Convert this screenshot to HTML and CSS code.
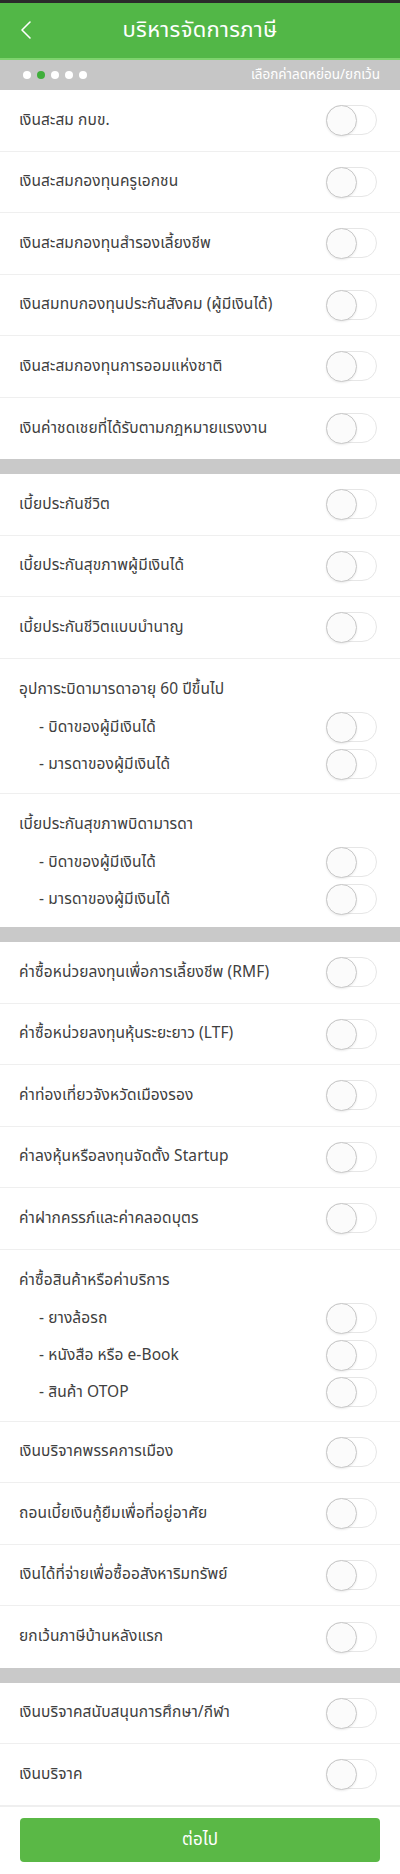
FILE: index.html
```html
<!DOCTYPE html>
<html lang="th">
<head>
<meta charset="utf-8">
<title>บริหารจัดการภาษี</title>
<link rel="stylesheet" href="styles.css">
</head>
<body>
<div class="app">
  <div class="statusbar"></div>
  <header class="header">
    <span class="back">
      <svg width="12" height="20" viewBox="0 0 12 20"><path d="M10 2 L2 10 L10 18" fill="none" stroke="#fff" stroke-width="1.6" stroke-linecap="round" stroke-linejoin="round"/></svg>
    </span>
    <h1 class="title">บริหารจัดการภาษี</h1>
  </header>
  <div class="accent"></div>
  <div class="stepbar">
    <div class="dots">
      <span class="dot"></span><span class="dot active"></span><span class="dot"></span><span class="dot"></span><span class="dot"></span>
    </div>
    <span class="step-label">เลือกค่าลดหย่อน/ยกเว้น</span>
  </div>

  <section class="section">
    <div class="row"><span class="label">เงินสะสม กบข.</span><span class="toggle"></span></div>
    <div class="row"><span class="label">เงินสะสมกองทุนครูเอกชน</span><span class="toggle"></span></div>
    <div class="row"><span class="label">เงินสะสมกองทุนสำรองเลี้ยงชีพ</span><span class="toggle"></span></div>
    <div class="row"><span class="label">เงินสมทบกองทุนประกันสังคม (ผู้มีเงินได้)</span><span class="toggle"></span></div>
    <div class="row"><span class="label">เงินสะสมกองทุนการออมแห่งชาติ</span><span class="toggle"></span></div>
    <div class="row last"><span class="label">เงินค่าชดเชยที่ได้รับตามกฎหมายแรงงาน</span><span class="toggle"></span></div>
  </section>
  <div class="divider"></div>

  <section class="section">
    <div class="row"><span class="label">เบี้ยประกันชีวิต</span><span class="toggle"></span></div>
    <div class="row"><span class="label">เบี้ยประกันสุขภาพผู้มีเงินได้</span><span class="toggle"></span></div>
    <div class="row"><span class="label">เบี้ยประกันชีวิตแบบบำนาญ</span><span class="toggle"></span></div>
    <div class="group">
      <div class="group-title">อุปการะบิดามารดาอายุ 60 ปีขึ้นไป</div>
      <div class="sub"><span class="label">- บิดาของผู้มีเงินได้</span><span class="toggle"></span></div>
      <div class="sub"><span class="label">- มารดาของผู้มีเงินได้</span><span class="toggle"></span></div>
    </div>
    <div class="group last short">
      <div class="group-title">เบี้ยประกันสุขภาพบิดามารดา</div>
      <div class="sub"><span class="label">- บิดาของผู้มีเงินได้</span><span class="toggle"></span></div>
      <div class="sub"><span class="label">- มารดาของผู้มีเงินได้</span><span class="toggle"></span></div>
    </div>
  </section>
  <div class="divider"></div>

  <section class="section">
    <div class="row"><span class="label">ค่าซื้อหน่วยลงทุนเพื่อการเลี้ยงชีพ (RMF)</span><span class="toggle"></span></div>
    <div class="row"><span class="label">ค่าซื้อหน่วยลงทุนหุ้นระยะยาว (LTF)</span><span class="toggle"></span></div>
    <div class="row"><span class="label">ค่าท่องเที่ยวจังหวัดเมืองรอง</span><span class="toggle"></span></div>
    <div class="row"><span class="label">ค่าลงหุ้นหรือลงทุนจัดตั้ง Startup</span><span class="toggle"></span></div>
    <div class="row"><span class="label">ค่าฝากครรภ์และค่าคลอดบุตร</span><span class="toggle"></span></div>
    <div class="group">
      <div class="group-title">ค่าซื้อสินค้าหรือค่าบริการ</div>
      <div class="sub"><span class="label">- ยางล้อรถ</span><span class="toggle"></span></div>
      <div class="sub"><span class="label">- หนังสือ หรือ e-Book</span><span class="toggle"></span></div>
      <div class="sub"><span class="label">- สินค้า OTOP</span><span class="toggle"></span></div>
    </div>
    <div class="row"><span class="label">เงินบริจาคพรรคการเมือง</span><span class="toggle"></span></div>
    <div class="row"><span class="label">ถอนเบี้ยเงินกู้ยืมเพื่อที่อยู่อาศัย</span><span class="toggle"></span></div>
    <div class="row"><span class="label">เงินได้ที่จ่ายเพื่อซื้ออสังหาริมทรัพย์</span><span class="toggle"></span></div>
    <div class="row last"><span class="label">ยกเว้นภาษีบ้านหลังแรก</span><span class="toggle"></span></div>
  </section>
  <div class="divider"></div>

  <section class="section">
    <div class="row"><span class="label">เงินบริจาคสนับสนุนการศึกษา/กีฬา</span><span class="toggle"></span></div>
    <div class="row"><span class="label">เงินบริจาค</span><span class="toggle"></span></div>
  </section>

  <div class="footer">
    <button class="next" type="button">ต่อไป</button>
  </div>
</div>
</body>
</html>
```

FILE: styles.css
```css
* { box-sizing: border-box; }
html, body {
  margin: 0;
  padding: 0;
  background: #ffffff;
}
body {
  font-family: "Noto Sans Thai", "Noto Sans", "DejaVu Sans", sans-serif;
  color: #3a3a3a;
}
.app {
  width: 400px;
  display: flex;
  flex-direction: column;
}
.statusbar {
  height: 3px;
  background: #2a2a2a;
}
.header {
  height: 55px;
  background: #52b747;
  display: flex;
  align-items: center;
  justify-content: center;
  position: relative;
}
.back {
  position: absolute;
  left: 20px;
  top: 17px;
  display: flex;
}
.title {
  margin: 0;
  font-size: 22px;
  font-weight: 400;
  color: #ffffff;
  letter-spacing: 0.3px;
}
.accent {
  height: 2px;
  background: #7ed36e;
}
.stepbar {
  height: 30px;
  background: #c6c6c6;
  display: flex;
  align-items: center;
  justify-content: space-between;
  padding: 0 20px 0 23px;
}
.dots {
  display: flex;
  gap: 6px;
}
.dot {
  width: 8px;
  height: 8px;
  border-radius: 50%;
  background: #ffffff;
}
.dot.active {
  background: #3fae3b;
}
.step-label {
  font-size: 13.5px;
  color: #ffffff;
}
.section {
  display: flex;
  flex-direction: column;
}
.row {
  height: 61.5px;
  display: flex;
  align-items: center;
  justify-content: space-between;
  padding: 0 23px 0 19px;
  border-bottom: 1.5px solid #efefef;
}
.row.last, .group.last {
  border-bottom: none;
}
.label {
  font-size: 15.5px;
  color: #404040;
  letter-spacing: 0.1px;
}
.group {
  display: flex;
  flex-direction: column;
  padding: 12px 23px 10px 19px;
  border-bottom: 1.5px solid #efefef;
}
.group.short {
  padding-bottom: 9.5px;
}
.group-title {
  height: 38px;
  display: flex;
  align-items: center;
  font-size: 15.5px;
  color: #404040;
  letter-spacing: 0.1px;
}
.sub {
  height: 37px;
  display: flex;
  align-items: center;
  justify-content: space-between;
  padding-left: 20px;
}
.toggle {
  width: 51px;
  height: 30px;
  border-radius: 15px;
  border: 1px solid #e6e6e6;
  background: #ffffff;
  position: relative;
  flex: none;
}
.toggle::before {
  content: "";
  position: absolute;
  left: -1px;
  top: -1px;
  width: 31px;
  height: 31px;
  border-radius: 50%;
  background: #fbfbfb;
  border: 1.5px solid #c8c8c8;
  box-shadow: 0 1px 2px rgba(0,0,0,0.08);
  box-sizing: border-box;
}
.divider {
  height: 15px;
  background: #c9c9c9;
}
.footer {
  padding: 11px 20px 12px 20px;
  border-top: 1.5px solid #efefef;
}
.next {
  width: 100%;
  height: 44px;
  border: none;
  border-radius: 4px;
  background: #5ab846;
  color: #ffffff;
  font-family: inherit;
  font-size: 17px;
  display: flex;
  align-items: center;
  justify-content: center;
}
```
